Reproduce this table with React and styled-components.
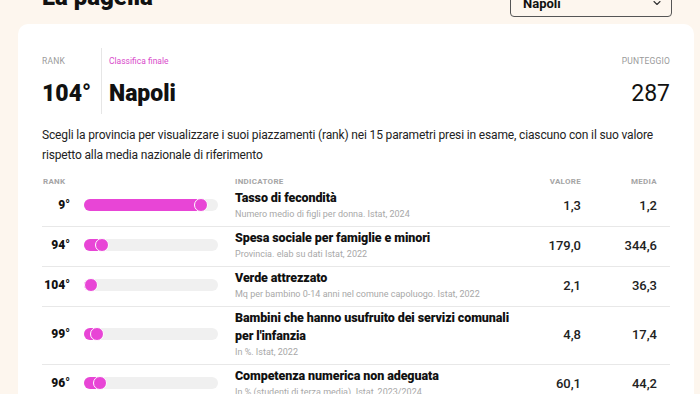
import React from "react";
import styled, { createGlobalStyle } from "styled-components";

const Global = createGlobalStyle`
  html, body { margin: 0; padding: 0; background: #fdf6ee; }
  body { font-family: Roboto, "Noto Sans", sans-serif; color: #111; overflow: hidden; }
  * { box-sizing: border-box; }
`;

const Page = styled.div`
  width: 700px;
  height: 394px;
  padding: 0 6px 0 18px;
  background: #fdf6ee;
  overflow: hidden;
`;

const Header = styled.div`
  display: flex;
  justify-content: space-between;
  align-items: center;
  height: 31px;
  margin-top: -14px;
  padding: 0 22px 0 24px;
`;

const Title = styled.h2`
  margin: 0;
  font-size: 24px;
  font-weight: 900;
  line-height: 31px;
  position: relative;
  top: -4px;
`;

const Select = styled.div`
  width: 162px;
  height: 31px;
  border: 1px solid #555;
  border-radius: 4px;
  display: flex;
  align-items: center;
  justify-content: space-between;
  padding: 3px 8px 0 12px;
  font-size: 13px;
  font-weight: 700;
  background: #fdf6ee;
`;

const Card = styled.div`
  margin-top: 7px;
  background: #fff;
  border-radius: 10px;
  padding: 24px 24px 20px 24px;
  min-height: 400px;
`;

const Top = styled.div`
  display: flex;
  align-items: stretch;
`;

const StatCell = styled.div`
  padding: 6px ${(p) => (p.$pad ? "7px" : "0")} 4px ${(p) => (p.$pad ? "7px" : "0")};
  border-left: ${(p) => (p.$divider ? "1px solid #e6e6e6" : "none")};
  flex: ${(p) => (p.$grow ? 1 : "none")};
  width: ${(p) => (p.$w ? p.$w : "auto")};
  text-align: ${(p) => (p.$right ? "right" : "left")};
`;

const StatLabel = styled.div`
  font-size: 8.5px;
  line-height: 14px;
  height: 14px;
  text-transform: ${(p) => (p.$pink ? "none" : "uppercase")};
  color: ${(p) => (p.$pink ? "#d94bcb" : "#9a9a9a")};
  letter-spacing: ${(p) => (p.$pink ? "0" : "0.2px")};
  margin-bottom: 10px;
`;

const StatValue = styled.div`
  font-size: 23px;
  line-height: 32px;
  font-weight: ${(p) => (p.$light ? 400 : 900)};
  color: #111;
`;

const Intro = styled.p`
  margin: 11px 0 0;
  font-size: 12px;
  line-height: 20px;
  letter-spacing: -0.15px;
  color: #222;
`;

const Grid = styled.div`
  display: grid;
  grid-template-columns: 28px 137px 1fr 46px 62px;
  column-gap: 14px;
`;

const HeadRow = styled(Grid)`
  margin-top: 11px;
  height: 11px;
  align-items: center;
  padding-right: 13px;
`;

const HeadCell = styled.div`
  font-size: 8px;
  font-weight: 700;
  color: #a5a5a5;
  letter-spacing: 0.3px;
  text-transform: uppercase;
  text-align: ${(p) => (p.$right ? "right" : "left")};
  margin-left: ${(p) => (p.$indent ? "1px" : "0")};
`;

const Row = styled(Grid)`
  align-items: center;
  padding: 2px 13px 5px 0;
  border-bottom: 1px solid #e8e8e8;
`;

const RankCell = styled.div`
  font-size: 12px;
  font-weight: 900;
  text-align: right;
`;

const Track = styled.div`
  position: relative;
  width: 134px;
  height: 12px;
  border-radius: 6px;
  background: #f0f0f0;
`;

const Fill = styled.div`
  position: absolute;
  left: 0;
  top: 0;
  height: 12px;
  border-radius: 6px 0 0 6px;
  background: #e845d6;
`;

const Dot = styled.div`
  position: absolute;
  top: -1px;
  width: 14px;
  height: 14px;
  margin-left: -7px;
  border-radius: 50%;
  background: #e845d6;
  border: 1.5px solid #fff;
`;

const Ind = styled.div`
  display: flex;
  flex-direction: column;
`;

const IndTitle = styled.div`
  font-size: 12.5px;
  line-height: 18px;
  font-weight: 900;
  letter-spacing: -0.1px;
  color: #111;
`;

const IndSource = styled.div`
  font-size: 9px;
  line-height: 14px;
  color: #a8a8a8;
`;

const Num = styled.div`
  font-size: 13px;
  text-align: right;
  color: #222;
  font-weight: 500;
`;

const Chevron = () => (
  <svg width="12" height="12" viewBox="0 0 24 24" fill="none" stroke="#333" strokeWidth="2.2" strokeLinecap="round" strokeLinejoin="round">
    <path d="M6 9l6 6 6-6" />
  </svg>
);

const rows = [
  { rank: "9°", pos: 117, title: "Tasso di fecondità", src: "Numero medio di figli per donna. Istat, 2024", val: "1,3", media: "1,2" },
  { rank: "94°", pos: 18, title: "Spesa sociale per famiglie e minori", src: "Provincia. elab su dati Istat, 2022", val: "179,0", media: "344,6" },
  { rank: "104°", pos: 7, title: "Verde attrezzato", src: "Mq per bambino 0-14 anni nel comune capoluogo. Istat, 2022", val: "2,1", media: "36,3" },
  { rank: "99°", pos: 13, title: "Bambini che hanno usufruito dei servizi comunali per l'infanzia", src: "In %. Istat, 2022", val: "4,8", media: "17,4" },
  { rank: "96°", pos: 16, title: "Competenza numerica non adeguata", src: "In % (studenti di terza media). Istat, 2023/2024", val: "60,1", media: "44,2" },
];

export default function App() {
  return (
    <Page>
      <Global />
      <Header>
        <Title>La pagella</Title>
        <Select>
          <span>Napoli</span>
          <Chevron />
        </Select>
      </Header>
      <Card>
        <Top>
          <StatCell $w="59px">
            <StatLabel>Rank</StatLabel>
            <StatValue>104°</StatValue>
          </StatCell>
          <StatCell $divider $pad $grow>
            <StatLabel $pink>Classifica finale</StatLabel>
            <StatValue>Napoli</StatValue>
          </StatCell>
          <StatCell $right>
            <StatLabel>Punteggio</StatLabel>
            <StatValue $light>287</StatValue>
          </StatCell>
        </Top>
        <Intro>
          Scegli la provincia per visualizzare i suoi piazzamenti (rank) nei 15 parametri presi in esame, ciascuno con il suo valore rispetto alla media nazionale di riferimento
        </Intro>
        <HeadRow>
          <HeadCell $indent>Rank</HeadCell>
          <div />
          <HeadCell>Indicatore</HeadCell>
          <HeadCell $right>Valore</HeadCell>
          <HeadCell $right>Media</HeadCell>
        </HeadRow>
        {rows.map((r) => (
          <Row key={r.title}>
            <RankCell>{r.rank}</RankCell>
            <Track>
              <Fill style={{ width: r.pos }} />
              <Dot style={{ left: r.pos }} />
            </Track>
            <Ind>
              <IndTitle>{r.title}</IndTitle>
              <IndSource>{r.src}</IndSource>
            </Ind>
            <Num>{r.val}</Num>
            <Num>{r.media}</Num>
          </Row>
        ))}
      </Card>
    </Page>
  );
}
